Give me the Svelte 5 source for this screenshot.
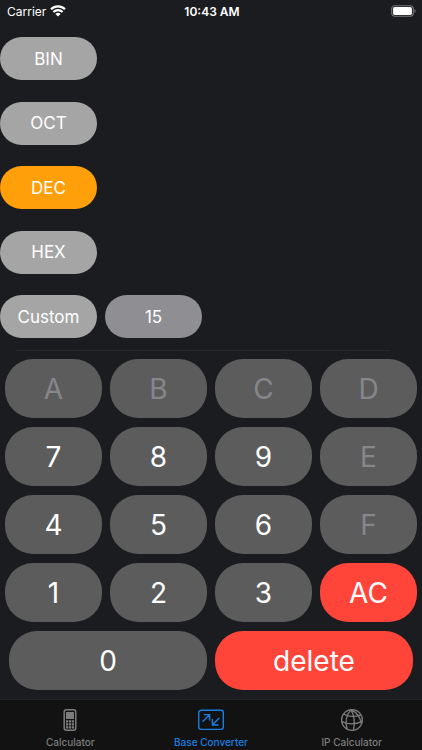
<script lang="ts">
  type Tab = 'calculator' | 'converter' | 'ip'

  const bases: { name: string; radix: number }[] = [
    { name: 'BIN', radix: 2 },
    { name: 'OCT', radix: 8 },
    { name: 'DEC', radix: 10 },
    { name: 'HEX', radix: 16 },
    { name: 'Custom', radix: 0 },
  ]

  const keys = ['A', 'B', 'C', 'D', '7', '8', '9', 'E', '4', '5', '6', 'F', '1', '2', '3', 'AC']

  const tabs: { id: Tab; label: string }[] = [
    { id: 'calculator', label: 'Calculator' },
    { id: 'converter', label: 'Base Converter' },
    { id: 'ip', label: 'IP Calculator' },
  ]

  let selected = $state('DEC')
  let customRadix = $state(15)
  let input = $state('')
  let activeTab: Tab = $state('converter')

  let radix = $derived(bases.find((b) => b.name === selected)?.radix || customRadix)

  function isDisabled(key: string) {
    return key !== 'AC' && parseInt(key, 16) >= radix
  }

  function press(key: string) {
    if (key === 'AC') {
      input = ''
    } else {
      input += key
    }
  }

  function select(name: string) {
    selected = name
    input = ''
  }

  function nextRadix() {
    customRadix = customRadix === 16 ? 2 : customRadix + 1
  }

  function convert(target: number) {
    return input ? parseInt(input, radix).toString(target || customRadix).toUpperCase() : ''
  }
</script>

<div class="app">
  <header class="status">
    <div class="carrier">
      <span>Carrier</span>
      <svg width="16" height="12" viewBox="0 0 16 12" fill="none" stroke="#fff" stroke-width="2.1">
        <path d="M1 4.2a10 10 0 0 1 14 0" />
        <path d="M3.4 7a6.5 6.5 0 0 1 9.2 0" />
        <path d="M8 11.6 5.4 9a3.7 3.7 0 0 1 5.2 0z" fill="#fff" stroke="none" />
      </svg>
    </div>
    <span class="time">10:43 AM</span>
    <div class="battery">
      <svg width="26" height="12" viewBox="0 0 26 12">
        <rect x="0.7" y="0.7" width="21.6" height="10.6" rx="3" fill="none" stroke="#77787b" stroke-width="1.1" />
        <rect x="2.1" y="2.1" width="18.8" height="7.8" rx="1.6" fill="#fff" />
        <path d="M23.5 4.1a2.1 2.1 0 0 1 0 3.8z" fill="#77787b" />
      </svg>
    </div>
  </header>

  <main>
    <div class="bases">
      {#each bases as base (base.name)}
        <div class="base-row">
          <button class="pill" class:active={selected === base.name} onclick={() => select(base.name)}>
            {base.name}
          </button>
          {#if base.name === 'Custom'}
            <button class="pill radix" onclick={nextRadix}>{customRadix}</button>
          {/if}
          <output class="value">{convert(base.radix)}</output>
        </div>
      {/each}
    </div>

    <hr />

    <div class="keypad">
      <div class="keys">
        {#each keys as key (key)}
          <button class="key" class:red={key === 'AC'} disabled={isDisabled(key)} onclick={() => press(key)}>
            {key}
          </button>
        {/each}
      </div>
      <div class="keys-bottom">
        <button class="key" onclick={() => press('0')}>0</button>
        <button class="key red" onclick={() => (input = input.slice(0, -1))}>delete</button>
      </div>
    </div>
  </main>

  <nav class="tabs">
    {#each tabs as tab (tab.id)}
      <button class="tab" class:current={activeTab === tab.id} onclick={() => (activeTab = tab.id)}>
        {#if tab.id === 'calculator'}
          <svg width="28" height="24" viewBox="0 0 28 24" fill="none" stroke="currentColor">
            <rect x="8.2" y="1.7" width="11.6" height="20.6" rx="2.2" stroke-width="1.5" />
            <rect x="10" y="4" width="8" height="7" rx="0.5" fill="currentColor" stroke="none" />
            <path d="M10 13.3h8M10 16.3h8M10 19.3h8" stroke-width="2.2" stroke-dasharray="2.2 0.7" />
          </svg>
        {:else if tab.id === 'converter'}
          <svg width="28" height="24" viewBox="0 0 28 24" fill="none" stroke="currentColor" stroke-width="1.4" stroke-linecap="round" stroke-linejoin="round">
            <rect x="1.7" y="2.2" width="24.6" height="19.2" rx="2.6" />
            <path d="M6 13.2 12.4 6.8M7.2 6.6h5.4v5.4" />
            <path d="M22 10.2 15.6 16.8M15.4 11.4V17h5.6" />
          </svg>
        {:else}
          <svg width="28" height="24" viewBox="0 0 28 24" fill="none" stroke="currentColor" stroke-width="1.3">
            <circle cx="14" cy="12" r="10.4" />
            <path d="M13 1.8C8 7 7 14 9.2 21.2M13 1.8C16.600 8 17 15 15.400 22.200M13 1.8c6 2.600 9.600 8.200 10.400 14.400" />
            <path d="M5.6 6C10.800 9 17.600 8.800 22.800 6.800M3.8 13.600c6.600 3 14 2.800 20.400-.2" />
          </svg>
        {/if}
        <span>{tab.label}</span>
      </button>
    {/each}
  </nav>
</div>

<style>
  :global(body) {
    margin: 0;
    background: #1b1c1f;
  }

  .app {
    display: flex;
    flex-direction: column;
    min-height: 100vh;
    color: #fff;
    background: #1b1c1f;
    font-family: Inter, 'Liberation Sans', sans-serif;
  }

  button {
    margin: 0;
    padding: 0;
    border: none;
    color: #fff;
    font-family: inherit;
    cursor: pointer;
  }

  .status {
    display: grid;
    grid-template-columns: 1fr auto 1fr;
    align-items: center;
    height: 22px;
    padding: 0 5px 0 7px;
    font-size: 12px;
  }

  .carrier {
    display: flex;
    align-items: center;
    gap: 4px;
  }

  .time {
    font-weight: 600;
  }

  .battery {
    display: flex;
    justify-content: flex-end;
  }

  main {
    display: flex;
    flex: 1;
    flex-direction: column;
  }

  .bases {
    display: flex;
    flex: 1;
    flex-direction: column;
    justify-content: space-between;
    padding: 15px 0 12px;
  }

  .base-row {
    display: grid;
    grid-template-columns: repeat(4, 1fr);
    gap: 8px;
    padding-right: 10px;
  }

  .pill {
    height: 43px;
    border-radius: 22px;
    background: #a5a5a5;
    font-size: 17px;
  }

  .pill.radix {
    background: #8e8e93;
  }

  .pill.active {
    background: #ff9f0a;
  }

  .value {
    grid-column-end: -1;
    align-self: center;
    text-align: right;
    font-size: 17px;
  }

  hr {
    width: auto;
    height: 1px;
    margin: 0 32px 0 16px;
    border: none;
    background: #27282b;
  }

  .keypad {
    display: flex;
    flex-direction: column;
    gap: 9px;
    padding: 8px 5px 9px;
  }

  .keys {
    display: grid;
    grid-template-columns: repeat(4, 1fr);
    gap: 9px 8px;
  }

  .keys-bottom {
    display: grid;
    grid-template-columns: repeat(2, 1fr);
    gap: 8px;
    padding: 0 4px;
  }

  .key {
    height: 59px;
    border-radius: 28px;
    background: #5c5c5c;
    font-size: 28px;
  }

  .key:disabled {
    color: #86868b;
    cursor: default;
  }

  .key.red {
    background: #ff453a;
  }

  .tabs {
    display: grid;
    grid-template-columns: repeat(3, 1fr);
    border-top: 1px solid #242529;
    background: #121212;
  }

  .tab {
    display: flex;
    flex-direction: column;
    align-items: center;
    gap: 4px;
    height: 50px;
    padding-top: 8px;
    background: transparent;
    color: #7c7c7c;
    font-size: 10px;
    font-weight: 500;
    line-height: 12px;
  }

  .tab.current {
    color: #1a7ee0;
  }
</style>
